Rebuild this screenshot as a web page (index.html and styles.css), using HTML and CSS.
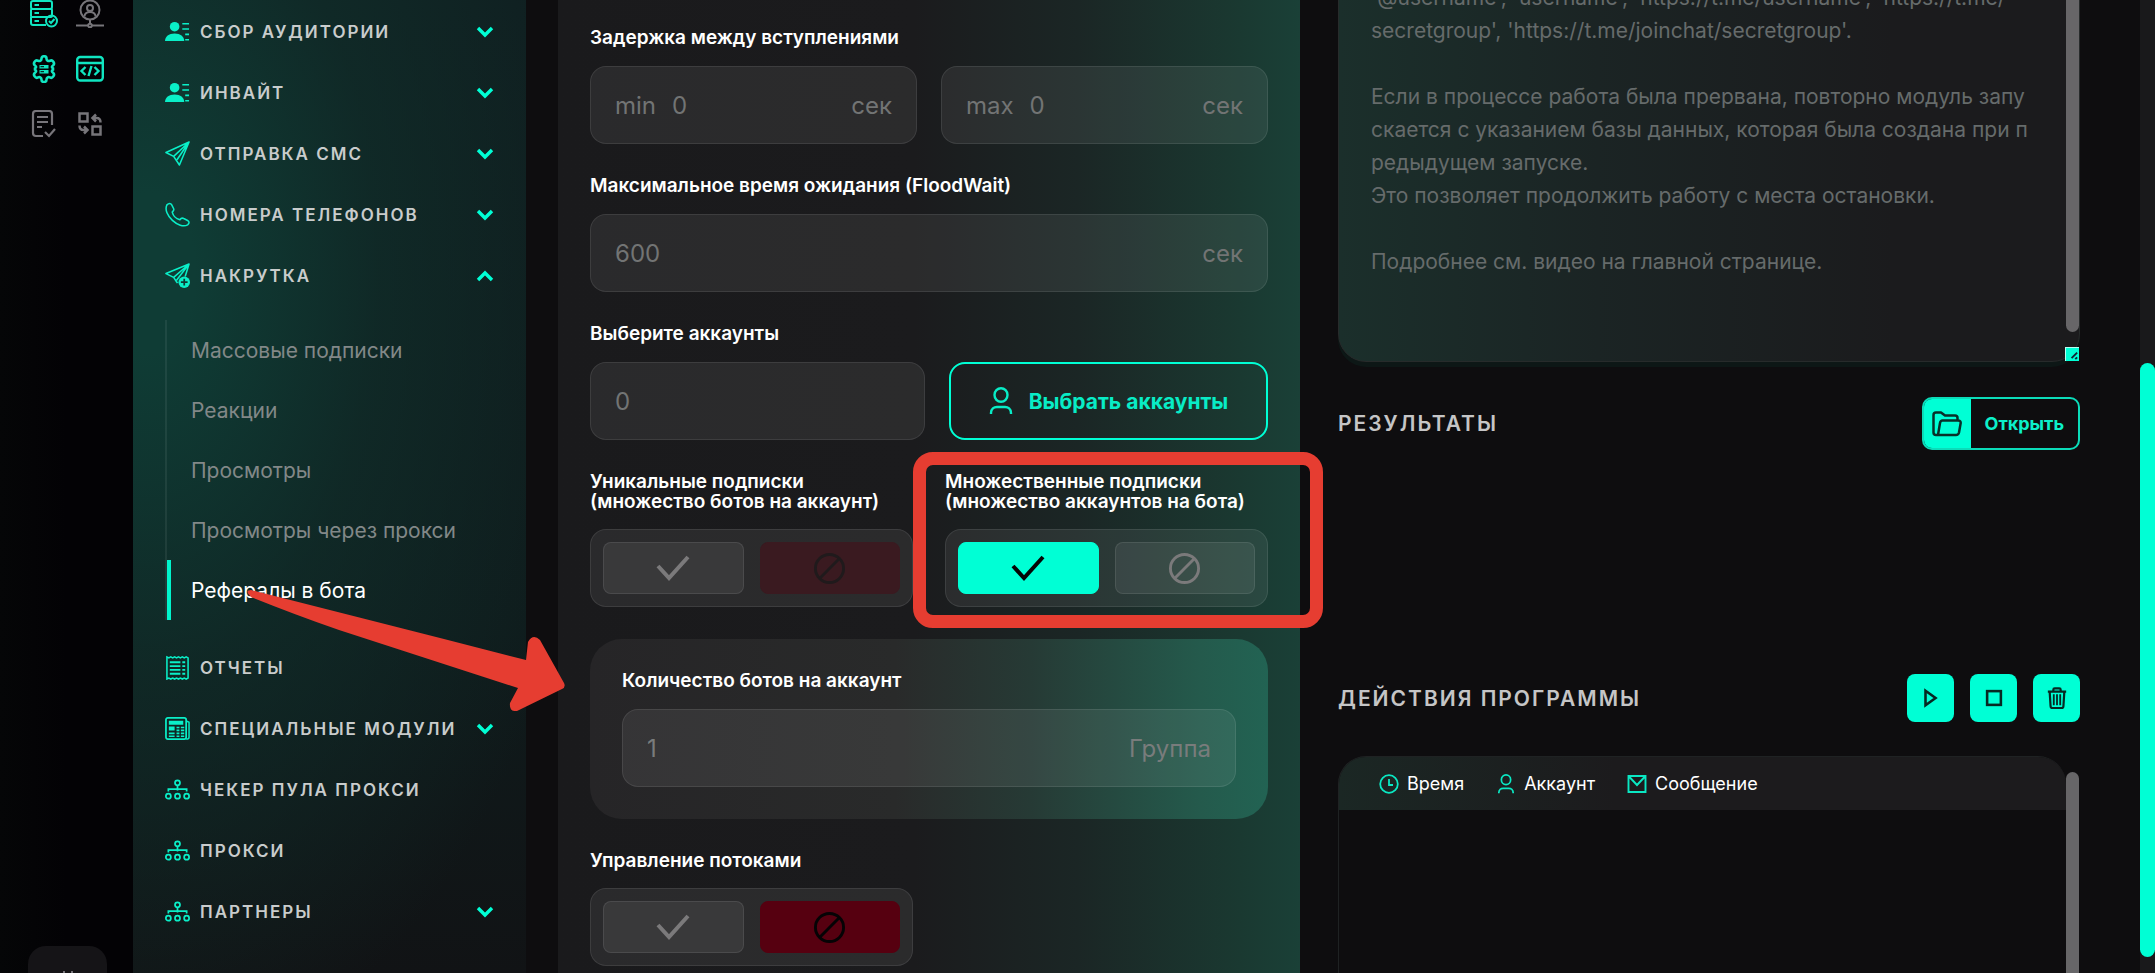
FILE: index.html
```html
<!DOCTYPE html>
<html lang="ru">
<head>
<meta charset="utf-8">
<title>Рефералы в бота</title>
<link rel="stylesheet" href="styles.css">
</head>
<body>
<svg class="sprite" aria-hidden="true">
  <symbol id="chevron" viewBox="0 0 18 12"><path d="M2 2l7 7 7-7" fill="none" stroke="currentColor" stroke-width="3.4"/></symbol>
  <symbol id="audience" viewBox="0 0 26 26"><circle cx="10" cy="8" r="5" fill="currentColor"/><path d="M0 23c0-5 4-8 10-8s10 3 10 8z" fill="currentColor"/><path d="M18 5h7M18 10.500h7M21 16h4M21 21.500h4" stroke="currentColor" stroke-width="1.600"/></symbol>
  <symbol id="plane" viewBox="0 0 26 26"><path d="M25 1L1 12l8 4 6 9zM25 1L9 16M25 1L12.500 19.500" fill="none" stroke="currentColor" stroke-width="1.600" stroke-linejoin="round"/></symbol>
  <symbol id="plane-plus" viewBox="0 0 26 26"><path d="M13 21l-1-1.500L9 15 1 11 25 1l-4 13M25 1L9 15M25 1L12 18" fill="none" stroke="currentColor" stroke-width="1.600" stroke-linejoin="round"/><circle cx="20" cy="20" r="6" fill="currentColor"/><path d="M20 16.500v7M16.500 20h7" stroke="#103a34" stroke-width="1.800"/></symbol>
  <symbol id="phone" viewBox="0 0 26 26"><path d="M2 3c2-2 4-2 5 0l2 4c.7 1.500-.5 2.500-1.500 3.500 1 4 4.500 7 8 8 1-1.500 2.300-2.200 4-1.300l4 2c2 1 2 3 0 4.500C15 29-3 13 2 3z" fill="none" stroke="currentColor" stroke-width="1.600" stroke-linejoin="round"/></symbol>
  <symbol id="report" viewBox="0 0 26 26"><path d="M2 2l2 1 2-1 2 1 2-1 2 1 2-1 2 1 2-1 2 1 2-1 2 1v21l-2 1-2-1-2 1-2-1-2 1-2-1-2 1-2-1-2 1-2-1-2 1z" fill="none" stroke="currentColor" stroke-width="1.600"/><path d="M5 7.500h11M5 11.500h11M5 15.500h11M5 19.500h11M18 7.500h3M18 11.500h3M18 15.500h3M18 19.500h3" stroke="currentColor" stroke-width="1.900"/></symbol>
  <symbol id="news" viewBox="0 0 26 26"><rect x="1" y="2" width="21" height="22" rx="2" fill="none" stroke="currentColor" stroke-width="1.800"/><path d="M22 5l3 1.500V22c0 1.500-1 2-3 2" fill="none" stroke="currentColor" stroke-width="1.500"/><path d="M4 5h15v4H4zM4 11h6v4H4z" fill="currentColor"/><path d="M12 12h3M16.500 12H20M12 15h3M16.500 15H20M4 18h6M12 18h3M16.500 18H20M4 21h6M12 21h3M16.500 21H20" stroke="currentColor" stroke-width="1.700"/></symbol>
  <symbol id="network" viewBox="0 0 26 26"><g fill="none" stroke="currentColor" stroke-width="1.800"><circle cx="13" cy="6" r="2.600"/><circle cx="3.500" cy="20" r="2.600"/><circle cx="13" cy="20" r="2.600"/><circle cx="22.500" cy="20" r="2.600"/><path d="M13 9v5M3.500 15v-2.500h19V15"/></g></symbol>
  <symbol id="person" viewBox="0 0 24 28"><g fill="none" stroke="currentColor" stroke-width="2.400"><ellipse cx="12" cy="8" rx="6.500" ry="6.800"/><path d="M2 27v-1c0-4 3-6 6-6h8c3 0 6 2 6 6v1"/></g></symbol>
  <symbol id="check" viewBox="0 0 34 26"><path d="M2 11l11 12L32 2" fill="none" stroke="currentColor" stroke-width="4"/></symbol>
  <symbol id="ban" viewBox="0 0 34 34"><circle cx="17" cy="17" r="14.500" fill="none" stroke="currentColor" stroke-width="3"/><path d="M7 27L27 7" stroke="currentColor" stroke-width="3"/></symbol>
  <symbol id="folder" viewBox="0 0 30 26"><path d="M6 24H4c-1.500 0-2.500-1-2.500-2.500V4C1.500 2.500 2.500 1.500 4 1.500h5l4 3h10c1.500 0 2.500 1 2.500 2.500v2M10.500 9.500H26c2 0 3 1 2.600 3L27 21.500c-.4 1.600-1.400 2.500-3 2.500H6l2-12c.3-1.600 1-2.500 2.500-2.500z" fill="none" stroke="currentColor" stroke-width="2.500" stroke-linejoin="round"/></symbol>
  <symbol id="clock" viewBox="0 0 20 20"><circle cx="10" cy="10" r="8.800" fill="none" stroke="currentColor" stroke-width="1.800"/><path d="M10 5v6h4" fill="none" stroke="currentColor" stroke-width="1.800"/></symbol>
  <symbol id="mail" viewBox="0 0 20 20"><path d="M1.500 2h17v16h-17zM1.500 2l8.500 9 8.500-9" fill="none" stroke="currentColor" stroke-width="1.900"/></symbol>
  <symbol id="play" viewBox="0 0 24 24"><path d="M6 4l11 8-11 8z" fill="none" stroke="currentColor" stroke-width="2.800"/></symbol>
  <symbol id="stop" viewBox="0 0 24 24"><rect x="4.500" y="4.500" width="15" height="15" fill="none" stroke="currentColor" stroke-width="2.800"/></symbol>
  <symbol id="trash" viewBox="0 0 24 24"><path d="M2 5h20M4 5l1 16c0 1.500 1 2 2 2h10c1 0 2-.5 2-2l1-16M8 5V3c0-1 .5-1.500 1.500-1.500h5c1 0 1.500.5 1.500 1.500v2" fill="none" stroke="currentColor" stroke-width="2.400"/><path d="M8.500 8v12M12 8v12M15.500 8v12" stroke="currentColor" stroke-width="2"/></symbol>
</svg>

<div class="app">
  <aside class="rail">
    <div class="rail-icons">
      <button class="rail-button rail-on" aria-label="Серверы"><svg viewBox="0 0 28 28"><g fill="none" stroke="currentColor" stroke-width="2"><rect x="1" y="1" width="21" height="8" rx="2"/><rect x="1" y="9" width="21" height="8" rx="1"/><path d="M16 25H3c-1.300 0-2-.7-2-2v-6"/><path d="M4.500 5H9M4.500 13H9M4.500 21H9"/><circle cx="21.500" cy="21" r="5.500"/><path d="M19 21l2 2 3.500-4"/></g></svg></button>
      <button class="rail-button" aria-label="Аккаунты"><svg viewBox="0 0 28 28"><g fill="none" stroke="currentColor" stroke-width="2"><circle cx="14" cy="10" r="9.500"/><circle cx="14" cy="8" r="3"/><path d="M8.500 16.500c0-6 11-6 11 0M14 20v4M0 25.500h12M16 25.500h12"/><circle cx="14" cy="25.500" r="1.800"/></g></svg></button>
      <button class="rail-button rail-on" aria-label="Настройки"><svg viewBox="0 0 28 28"><path d="M11.500 3.500c0-3 5-3 5 0 0 2 1.500 3 3.500 2.300 2.500-1.500 5.500 2.700 3 4.700-1.500 1-1.500 2 0 2.800v1.400c-1.500 1-1.500 2 0 3 2.500 2-.5 6.200-3 4.700-2-.8-3.500.3-3.500 2.300 0 3-5 3-5 0 0-2-1.500-3.100-3.500-2.300-2.500 1.500-5.500-2.700-3-4.700 1.500-1 1.500-2 0-3v-1.400c1.500-.8 1.500-1.800 0-2.800C2.500 8.500 5.500 4.300 8 5.800c2 .7 3.500-.3 3.500-2.300z" fill="none" stroke="currentColor" stroke-width="2.600"/><path d="M9.500 10h9v3.500h-9zM9.500 15h9v3.500h-9z" fill="currentColor"/><path d="M10.500 11.700h3.500M10.500 16.700h3.500" stroke="#030205"/></svg></button>
      <button class="rail-button rail-on" aria-label="Код"><svg viewBox="0 0 28 28"><g fill="none" stroke="currentColor" stroke-width="2.400"><rect x="1.200" y="2" width="25.600" height="23.500" rx="3"/><path d="M1 8h26M9.500 12l-4 4 4 4M18.500 12l4 4-4 4M15.500 11l-3 10"/></g></svg></button>
      <button class="rail-button" aria-label="Задачи"><svg viewBox="0 0 28 28"><g fill="none" stroke="currentColor" stroke-width="2.200"><path d="M13 26H6c-2 0-3-1-3-3V4c0-2 1-3 3-3h13c2 0 3 1 3 3v11M7 7h11M7 12h11M7 17h5M15 22l4 4 6-7"/></g></svg></button>
      <button class="rail-button" aria-label="Обмен"><svg viewBox="0 0 28 28"><g fill="none" stroke="currentColor" stroke-width="2.500"><rect x="3.500" y="3.500" width="8" height="8"/><rect x="16.500" y="16.500" width="8" height="8"/><path d="M24.500 12.500c0-3-1-4.500-4-4.500H17M20 4.500L16.500 8l3.500 3.500M3.500 15.500c0 3 1 4.500 4 4.500H11M8 16.500l3.500 3.500L8 23.500"/></g></svg></button>
    </div>
    <button class="rail-bottom" aria-label="Свернуть"><svg viewBox="0 0 16 16"><path d="M4 0v12l4-4 4 4V0" fill="none" stroke="currentColor" stroke-width="2"/></svg></button>
  </aside>

  <nav class="menu">
    <a class="menu-item" href="#"><svg class="menu-icon"><use href="#audience"/></svg><span class="menu-text">Сбор аудитории</span><svg class="chevron"><use href="#chevron"/></svg></a>
    <a class="menu-item" href="#"><svg class="menu-icon"><use href="#audience"/></svg><span class="menu-text">Инвайт</span><svg class="chevron"><use href="#chevron"/></svg></a>
    <a class="menu-item" href="#"><svg class="menu-icon"><use href="#plane"/></svg><span class="menu-text">Отправка СМС</span><svg class="chevron"><use href="#chevron"/></svg></a>
    <a class="menu-item" href="#"><svg class="menu-icon"><use href="#phone"/></svg><span class="menu-text">Номера телефонов</span><svg class="chevron"><use href="#chevron"/></svg></a>
    <a class="menu-item" href="#"><svg class="menu-icon"><use href="#plane-plus"/></svg><span class="menu-text">Накрутка</span><svg class="chevron chevron-up"><use href="#chevron"/></svg></a>
    <div class="submenu">
      <a class="submenu-item" href="#">Массовые подписки</a>
      <a class="submenu-item" href="#">Реакции</a>
      <a class="submenu-item" href="#">Просмотры</a>
      <a class="submenu-item" href="#">Просмотры через прокси</a>
      <a class="submenu-item submenu-active" href="#">Рефералы в бота</a>
    </div>
    <a class="menu-item" href="#"><svg class="menu-icon"><use href="#report"/></svg><span class="menu-text">Отчеты</span></a>
    <a class="menu-item" href="#"><svg class="menu-icon"><use href="#news"/></svg><span class="menu-text">Специальные модули</span><svg class="chevron"><use href="#chevron"/></svg></a>
    <a class="menu-item" href="#"><svg class="menu-icon"><use href="#network"/></svg><span class="menu-text">Чекер пула прокси</span></a>
    <a class="menu-item" href="#"><svg class="menu-icon"><use href="#network"/></svg><span class="menu-text">Прокси</span></a>
    <a class="menu-item" href="#"><svg class="menu-icon"><use href="#network"/></svg><span class="menu-text">Партнеры</span><svg class="chevron"><use href="#chevron"/></svg></a>
  </nav>

  <main class="content">
    <form class="panel">
      <div class="field">
        <label class="label" for="delay-min">Задержка между вступлениями</label>
        <div class="row">
          <div class="box"><label class="prefix" for="delay-min">min</label><input class="input" id="delay-min" placeholder="0"><span class="suffix">сек</span></div>
          <div class="box"><label class="prefix" for="delay-max">max</label><input class="input" id="delay-max" placeholder="0"><span class="suffix">сек</span></div>
        </div>
      </div>
      <div class="field">
        <label class="label" for="flood">Максимальное время ожидания (FloodWait)</label>
        <div class="box"><input class="input" id="flood" placeholder="600"><span class="suffix">сек</span></div>
      </div>
      <div class="field">
        <label class="label" for="accounts">Выберите аккаунты</label>
        <div class="row row-accounts">
          <div class="box"><input class="input" id="accounts" placeholder="0"></div>
          <button class="choose" type="button"><svg class="choose-icon"><use href="#person"/></svg>Выбрать аккаунты</button>
        </div>
      </div>
      <div class="row row-toggles">
        <fieldset class="field-toggle field-dim">
          <legend class="label">Уникальные подписки<br>(множество ботов на аккаунт)</legend>
          <div class="toggle">
            <label class="option"><input class="radio" type="radio" name="unique" aria-label="Да"><svg class="icon-check"><use href="#check"/></svg></label>
            <label class="option option-no"><input class="radio" type="radio" name="unique" aria-label="Нет" checked><svg class="icon-ban"><use href="#ban"/></svg></label>
          </div>
        </fieldset>
        <div class="marked">
          <fieldset class="field-toggle">
            <legend class="label">Множественные подписки<br>(множество аккаунтов на бота)</legend>
            <div class="toggle">
              <label class="option option-yes"><input class="radio" type="radio" name="multi" aria-label="Да" checked><svg class="icon-check"><use href="#check"/></svg></label>
              <label class="option"><input class="radio" type="radio" name="multi" aria-label="Нет"><svg class="icon-ban"><use href="#ban"/></svg></label>
            </div>
          </fieldset>
          <div class="highlight"></div>
        </div>
      </div>
      <div class="group">
        <label class="label" for="bots">Количество ботов на аккаунт</label>
        <div class="box"><input class="input" id="bots" placeholder="1"><span class="suffix">Группа</span></div>
      </div>
      <div class="row row-toggles">
        <fieldset class="field-toggle">
          <legend class="label">Управление потоками</legend>
          <div class="toggle">
            <label class="option"><input class="radio" type="radio" name="threads" aria-label="Да"><svg class="icon-check"><use href="#check"/></svg></label>
            <label class="option option-no"><input class="radio" type="radio" name="threads" aria-label="Нет" checked><svg class="icon-ban"><use href="#ban"/></svg></label>
          </div>
        </fieldset>
      </div>
    </form>

    <section class="side">
      <div class="info">
        <textarea class="info-text" aria-label="Описание" readonly>
'@username', 'username', 'https://t.me/username', 'https://t.me/
secretgroup', 'https://t.me/joinchat/secretgroup'.

Если в процессе работа была прервана, повторно модуль запу
скается с указанием базы данных, которая была создана при п
редыдущем запуске.
Это позволяет продолжить работу с места остановки.

Подробнее см. видео на главной странице.</textarea>
        <div class="info-thumb"></div>
        <div class="resizer"><svg viewBox="0 0 14 14"><path d="M6 11l6-6M10 12l2-2" stroke="currentColor" stroke-width="2"/></svg></div>
      </div>
      <header class="head">
        <h2 class="title">Результаты</h2>
        <button class="open"><span class="open-icon"><svg><use href="#folder"/></svg></span><span class="open-text">Открыть</span></button>
      </header>
      <header class="head head-actions">
        <h2 class="title">Действия программы</h2>
        <div class="actions">
          <button class="action" aria-label="Запустить"><svg><use href="#play"/></svg></button>
          <button class="action" aria-label="Остановить"><svg><use href="#stop"/></svg></button>
          <button class="action" aria-label="Очистить"><svg><use href="#trash"/></svg></button>
        </div>
      </header>
      <div class="log">
        <div class="log-body">
          <table class="log-table">
            <thead><tr>
              <th><span class="cell"><svg class="cell-icon"><use href="#clock"/></svg>Время</span></th>
              <th><span class="cell"><svg class="cell-icon"><use href="#person"/></svg>Аккаунт</span></th>
              <th><span class="cell"><svg class="cell-icon"><use href="#mail"/></svg>Сообщение</span></th>
              <th class="rest"></th>
            </tr></thead>
          </table>
        </div>
        <div class="log-scroll"></div>
      </div>
    </section>
  </main>
  <div class="scrollbar"><div class="scrollbar-thumb"></div></div>

  <svg class="arrow" viewBox="0 0 324 126" aria-hidden="true"><path d="M8 5L201 54 283 75 285 57Q290 48 297 55L321 98Q323 102 319 104L274 126Q266 127 267 118L275 103 96 45Q50 29 8 12Q1 5 8 5z" fill="#e63d31"/></svg>
</div>
</body>
</html>
```
FILE: styles.css
```css
:root {
  --accent: #00ffd5;
  --glass: rgba(255, 255, 255, 0.07);
  --line: rgba(255, 255, 255, 0.09);
  --muted: #727474;
}

* { box-sizing: border-box; }

body {
  margin: 0;
  background: #0e0d0f;
  color: #fff;
  font-family: Inter, "Noto Sans", sans-serif;
}

button, input, textarea { font: inherit; }
button { border: 0; padding: 0; cursor: pointer; }

.sprite { display: none; }

.app {
  position: relative;
  display: flex;
  height: 100vh;
  overflow: hidden;
}

/* Icon rail */
.rail {
  display: flex;
  flex-direction: column;
  flex: 0 0 133px;
  background: linear-gradient(90deg, #050607, #030205 50%);
}
.rail-icons {
  display: grid;
  grid-template-columns: 28px 28px;
  justify-content: center;
  gap: 27px 18px;
}
.rail-button { width: 28px; height: 28px; background: none; color: #77757a; }
.rail-button svg { display: block; width: 28px; height: 28px; }
.rail-on { color: #10e5c1; }
.rail-bottom {
  width: 79px;
  height: 66px;
  margin: auto 0 -39px 28px;
  border-radius: 18px;
  background: #151417;
  color: #77757a;
}
.rail-bottom svg { display: block; width: 16px; height: 16px; margin: 0 auto; }

/* Main menu */
.menu {
  flex: 0 0 393px;
  padding: 1px 32px 0;
  background:
    radial-gradient(ellipse 460px 800px at 4% 28%, #0f3c35 10%, rgba(16, 46, 42, 0.7) 50%, transparent),
    linear-gradient(180deg, #101e20, #0f1b1c 65%, #111315);
}
.menu-item {
  display: flex;
  align-items: center;
  gap: 10px;
  height: 61px;
  color: #c9cccc;
  font-size: 17px;
  font-weight: 600;
  letter-spacing: 2px;
  text-transform: uppercase;
  text-decoration: none;
  white-space: nowrap;
}
.menu-icon { flex: none; width: 25px; height: 25px; color: #0aefc8; }
.menu-text { flex: 1; min-width: 0; }
.chevron { flex: none; width: 18px; height: 12px; color: var(--accent); }
.chevron-up { transform: rotate(180deg); }
.submenu {
  margin: 14px 0 17px;
  border-left: 2px solid rgba(255, 255, 255, 0.07);
}
.submenu-item {
  display: flex;
  align-items: center;
  height: 60px;
  padding-left: 20px;
  border-left: 4px solid transparent;
  color: #828888;
  font-size: 21px;
  text-decoration: none;
}
.submenu-active { border-color: #00f5cc; color: #fff; }

/* Content columns */
.content {
  display: grid;
  grid-template-columns: minmax(0, 1fr) minmax(0, 1fr);
  gap: 38px;
  flex: 1;
  padding: 0 60px 0 32px;
}

/* Settings form */
.panel {
  display: flex;
  flex-direction: column;
  gap: 32px;
  padding: 28px 32px 0;
  background: linear-gradient(90deg, #1a1a1c, #1b1b1d 48%, #1b2625 70%, #1a3931 92%, #1a4037);
}
.field, .group { display: flex; flex-direction: column; gap: 18px; }
.label {
  padding: 0;
  font-size: 19px;
  font-weight: 600;
  line-height: 20px;
  white-space: nowrap;
}
.row { display: grid; grid-template-columns: minmax(0, 1fr) minmax(0, 1fr); gap: 24px; }
.row-accounts { grid-template-columns: minmax(0, 335fr) minmax(0, 319fr); }
.row-toggles { gap: 32px; }
.box {
  display: flex;
  align-items: center;
  gap: 16px;
  height: 78px;
  padding: 0 24px;
  border: 1px solid var(--line);
  border-radius: 16px;
  background: var(--glass);
  color: var(--muted);
  font-size: 24px;
}
.input {
  flex: 1;
  min-width: 0;
  padding: 0;
  border: 0;
  outline: 0;
  background: none;
  color: inherit;
}
.input::placeholder { color: var(--muted); opacity: 1; }
.choose {
  display: flex;
  align-items: center;
  justify-content: center;
  gap: 16px;
  border: 2px solid var(--accent);
  border-radius: 16px;
  background: none;
  color: #08ecc6;
  font-size: 21px;
  font-weight: 700;
  white-space: nowrap;
}
.choose-icon { width: 24px; height: 28px; }
.marked { position: relative; }
.field-toggle {
  min-width: 0;
  margin: 0;
  padding: 0;
  border: 0;
}
.toggle {
  display: grid;
  grid-template-columns: 1fr 1fr;
  gap: 16px;
  height: 78px;
  margin-top: 17px;
  padding: 12px;
  border: 1px solid var(--line);
  border-radius: 16px;
  background: var(--glass);
}
.option {
  display: flex;
  align-items: center;
  justify-content: center;
  border: 1px solid var(--line);
  border-radius: 8px;
  background: rgba(255, 255, 255, 0.07);
  color: #7b7a7b;
}
.radio { position: absolute; width: 1px; height: 1px; margin: 0; opacity: 0; }
.icon-check { width: 34px; height: 26px; }
.icon-ban { width: 33px; height: 33px; }
.option-yes { border-color: var(--accent); background: var(--accent); color: #050505; }
.option-no { border-color: #560010; background: #560010; color: #050305; }
.field-dim .option-no { border-color: #3a1a20; background: #3a1a20; color: #201a1c; }
.highlight {
  position: absolute;
  inset: -20px -55px -21px -32px;
  border: 13px solid #e63d31;
  border-radius: 20px;
  pointer-events: none;
}
.group {
  padding: 32px;
  border-radius: 32px;
  background: linear-gradient(90deg, #262527, #292a2a 45%, #263a35 65%, #245a4c 90%, #226353);
}
.group .suffix { color: #797c7c; }
.group .input::placeholder { color: #797c7c; }

/* Right column */
.side { display: flex; flex-direction: column; }
.info {
  position: relative;
  margin-top: -20px;
  border-radius: 0 0 28px 28px;
  box-shadow: 0 5px 0 #0d1716;
}
.info-text {
  display: block;
  width: 100%;
  height: 382px;
  padding: 0 32px;
  border: 1px solid #272b2b;
  border-radius: 0 0 28px 28px;
  outline: 0;
  background: linear-gradient(90deg, #1b2f2b, #1b2424 35%, #1b1b1d 75%);
  color: #666b6b;
  font-size: 21px;
  line-height: 33px;
  white-space: pre;
  overflow: hidden;
  resize: none;
}
.info-thumb {
  position: absolute;
  top: 0;
  right: 1px;
  bottom: 30px;
  width: 13px;
  border-radius: 7px;
  background: #676668;
}
.resizer {
  position: absolute;
  right: 1px;
  bottom: 1px;
  width: 14px;
  height: 14px;
  border: 1px solid #b8fff2;
  border-width: 1px 0 0 1px;
  background: var(--accent);
  color: #123;
}
.resizer svg { display: block; }
.head {
  display: flex;
  align-items: center;
  justify-content: space-between;
  margin-top: 35px;
}
.head-actions { margin-top: 224px; }
.title {
  margin: 0;
  color: #c5c5c6;
  font-size: 21px;
  font-weight: 600;
  letter-spacing: 2px;
  text-transform: uppercase;
}
.open {
  display: flex;
  height: 53px;
  border: 2px solid #0bdcb9;
  border-radius: 10px;
  overflow: hidden;
  background: #0e0d0f;
  color: #0cf0ca;
  font-size: 18px;
  font-weight: 700;
}
.open-icon {
  display: grid;
  place-items: center;
  width: 47px;
  height: 100%;
  background: var(--accent);
  color: #083029;
}
.open-icon svg { width: 30px; height: 26px; }
.open-text { align-self: center; padding: 0 14px; }
.actions { display: flex; gap: 16px; }
.action {
  display: grid;
  place-items: center;
  width: 47px;
  height: 48px;
  border-radius: 8px;
  background: var(--accent);
  color: #062822;
}
.action svg { width: 22px; height: 22px; }
.log { display: flex; flex: 1; margin-top: 34px; }
.log-body {
  flex: 1;
  border: 1px solid #1f2223;
  border-bottom: 0;
  border-right: 0;
  border-radius: 28px 28px 0 0;
  overflow: hidden;
}
.log-table { width: 100%; border-collapse: collapse; }
.log-table thead { background: linear-gradient(90deg, #1b2724, #1c1b1d 38%); }
.log-table th {
  height: 53px;
  padding: 0 0 0 32px;
  font-size: 18px;
  font-weight: 400;
}
.log-table th:first-child { padding-left: 40px; }
.log-table .rest { width: 100%; }
.cell { display: flex; align-items: center; gap: 8px; }
.cell-icon { width: 20px; height: 20px; color: #0ae8c3; }
.log-scroll {
  width: 13px;
  margin: 16px 1px 0 0;
  border-radius: 7px 7px 0 0;
  background: #676668;
}

/* Page scrollbar */
.scrollbar { flex: 0 0 15px; padding: 363px 0 16px; background: #19191b; }
.scrollbar-thumb { height: 100%; border-radius: 8px; background: var(--accent); }

/* Pointer from the active menu entry to the form */
.arrow {
  position: absolute;
  left: 243px;
  top: 585px;
  width: 324px;
  height: 126px;
  pointer-events: none;
}
```
